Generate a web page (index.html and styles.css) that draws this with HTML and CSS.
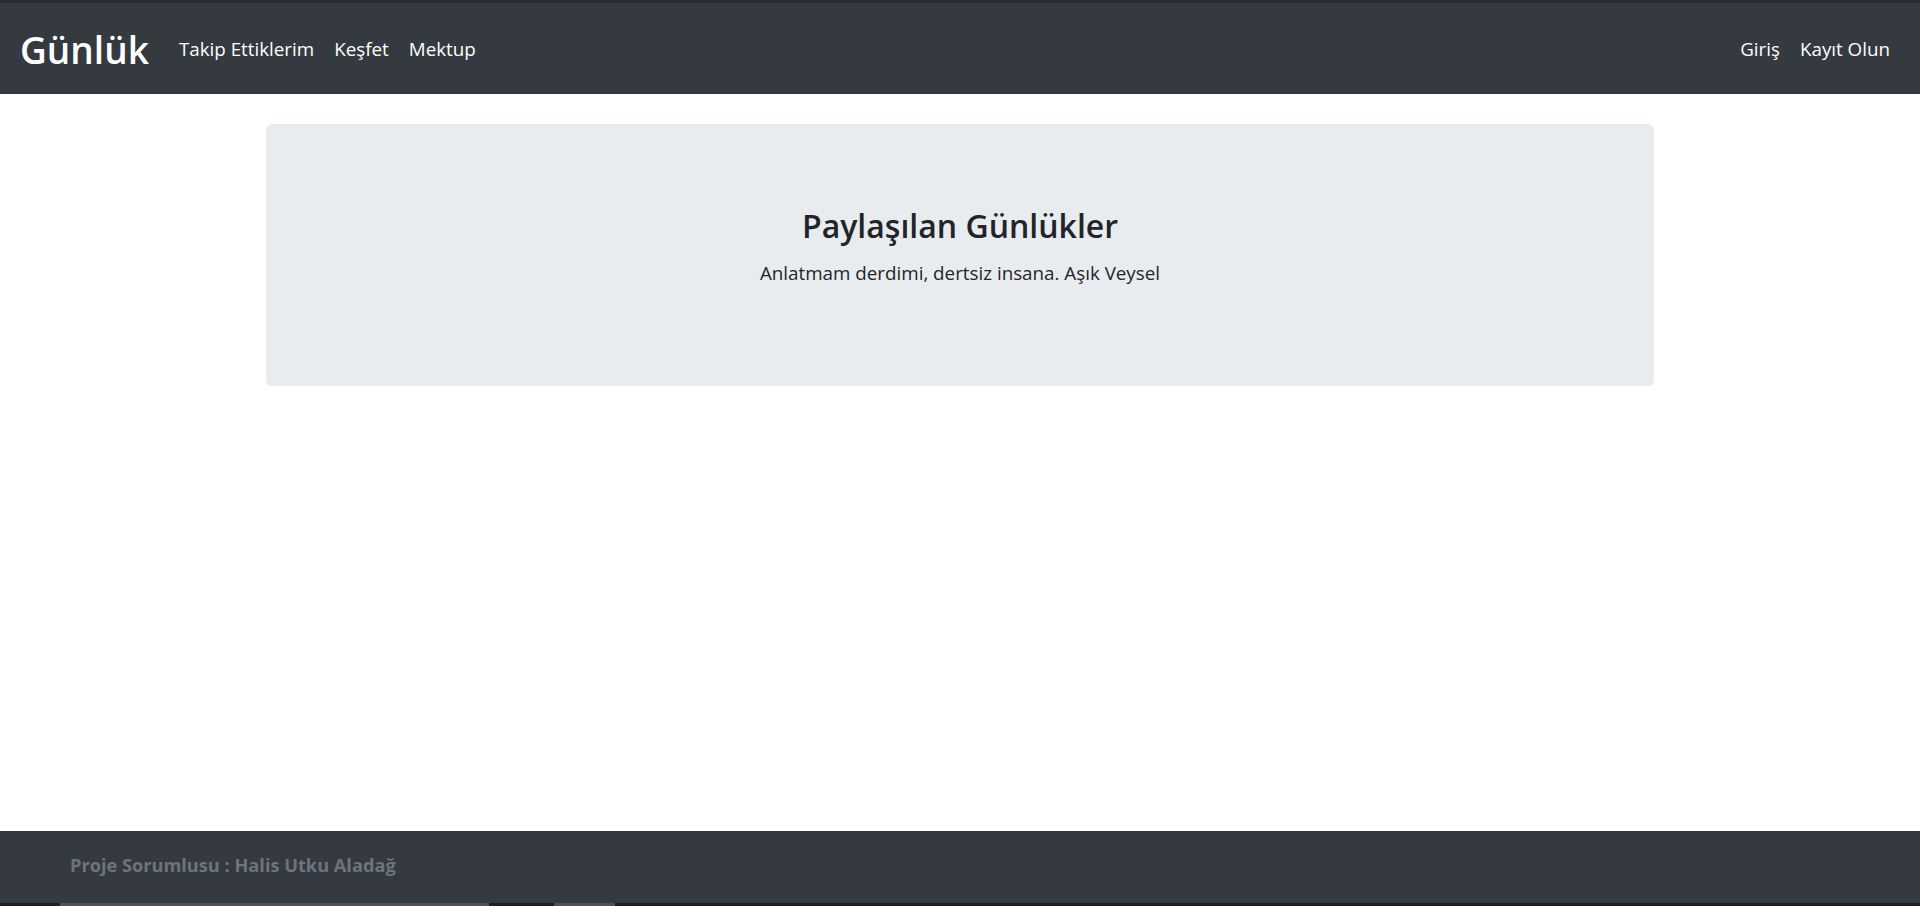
FILE: index.html
```html
<!DOCTYPE html>
<html lang="tr">
<head>
<meta charset="utf-8">
<title>Günlük</title>
<link rel="stylesheet" href="styles.css">
</head>
<body>
<div class="page">
  <div class="topline"></div>
  <nav class="navbar">
    <a class="brand" href="#">Günlük</a>
    <ul class="nav nav-left">
      <li><a href="#">Takip Ettiklerim</a></li>
      <li><a href="#">Keşfet</a></li>
      <li><a href="#">Mektup</a></li>
    </ul>
    <ul class="nav nav-right">
      <li><a href="#">Giriş</a></li>
      <li><a href="#">Kayıt Olun</a></li>
    </ul>
  </nav>
  <main class="main">
    <section class="jumbotron">
      <h1 class="title">Paylaşılan Günlükler</h1>
      <p class="lead">Anlatmam derdimi, dertsiz insana. Aşık Veysel</p>
    </section>
  </main>
  <footer class="footer">
    <span class="footer-text">Proje Sorumlusu : Halis Utku Aladağ</span>
  </footer>
  <div class="bottombar">
    <span class="seg seg1"></span>
    <span class="seg seg2"></span>
  </div>
</div>
</body>
</html>
```
FILE: styles.css
```css
* { box-sizing: border-box; }
html, body { margin: 0; padding: 0; }
body {
  font-family: "Open Sans", "Noto Sans", sans-serif;
  color: #212529;
  background: #fff;
}
.page {
  display: flex;
  flex-direction: column;
  height: 906px;
  overflow: hidden;
}
.topline { height: 3px; background: #2a2b2d; flex: none; }
.navbar {
  flex: none;
  height: 91px;
  background: #343a40;
  display: flex;
  align-items: center;
  padding: 0 20px;
}
.brand {
  color: #fff;
  text-decoration: none;
  font-size: 37px;
  font-weight: 600;
  margin-right: 20px;
  line-height: 1;
  padding-top: 2px;
}
.nav {
  list-style: none;
  margin: 0;
  padding: 0;
  display: flex;
}
.nav-right { margin-left: auto; }
.nav a {
  display: block;
  padding: 0 10px;
  color: #fff;
  text-decoration: none;
  font-size: 18.8px;
}
.main { flex: 1; padding-top: 30px; }
.jumbotron {
  width: 1388px;
  height: 262px;
  margin: 0 auto;
  background: #e9ecef;
  border-radius: 6px;
  padding-top: 83px;
  text-align: center;
}
.title {
  margin: 0 0 14px;
  font-size: 32px;
  font-weight: 600;
  line-height: 1.2;
}
.lead {
  margin: 0;
  font-size: 18.8px;
  line-height: 1.5;
}
.footer {
  flex: none;
  height: 72px;
  background: #343a40;
  display: flex;
  align-items: center;
  padding-left: 70px;
}
.footer-text {
  color: #6c757d;
  font-weight: 700;
  font-size: 18.2px;
  line-height: 1.2;
  margin-top: -3px;
}
.bottombar {
  flex: none;
  height: 3px;
  background: #1f1f20;
  display: flex;
}
.seg { height: 3px; background: #505152; }
.seg1 { margin-left: 60px; width: 429px; }
.seg2 { margin-left: 65px; width: 61px; }
```
